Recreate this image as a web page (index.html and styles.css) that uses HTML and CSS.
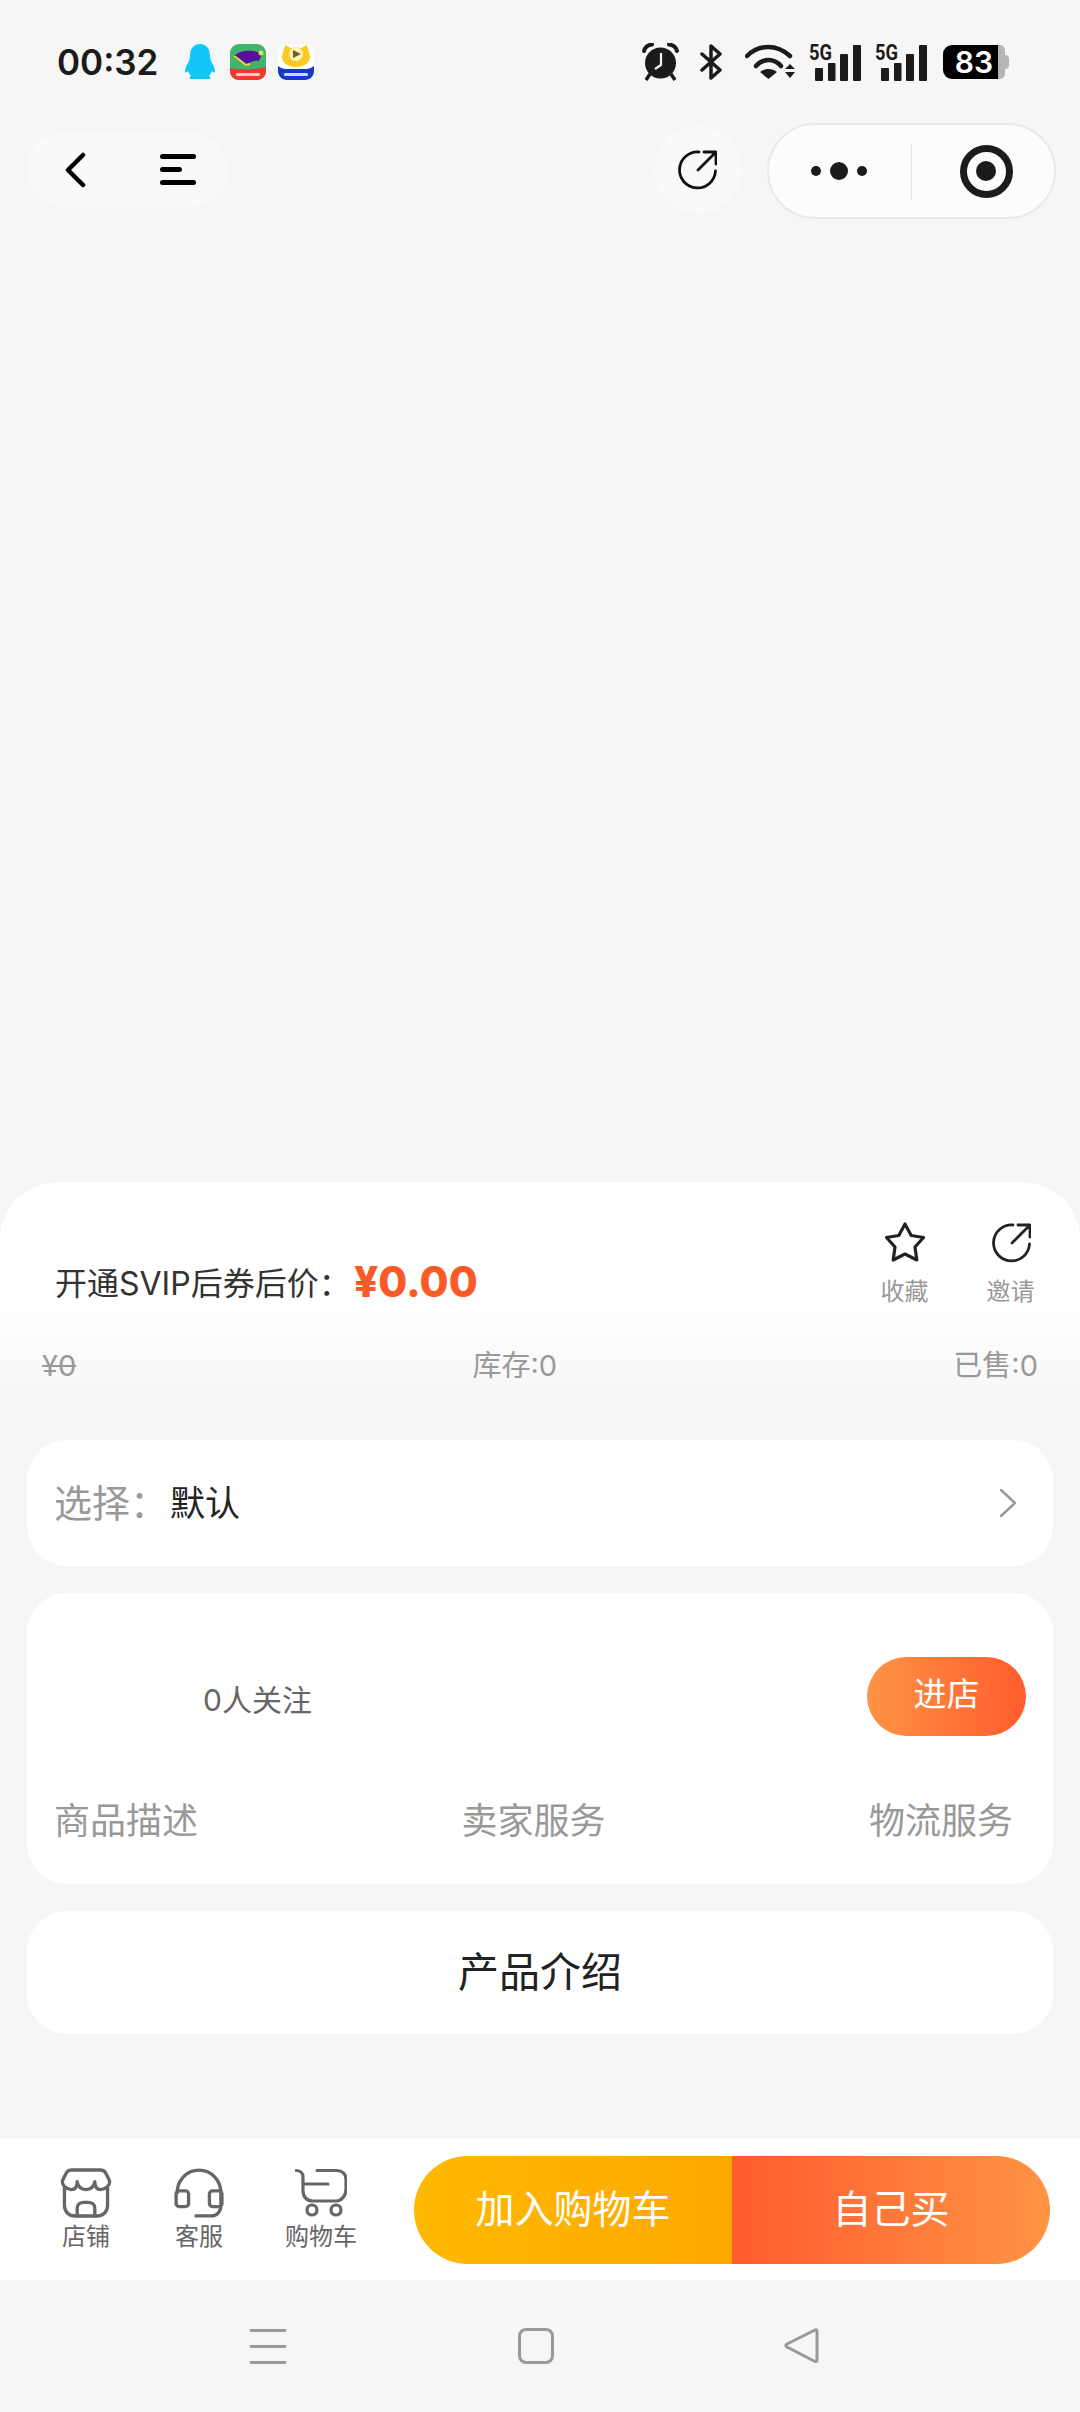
FILE: index.html
```html
<!DOCTYPE html>
<html lang="zh-CN">
<head>
    <meta charset="UTF-8">
    <meta name="viewport" content="width=device-width, initial-scale=1.0">
    <title>商品详情</title>
    <link rel="stylesheet" href="styles.css">
</head>
<body>
    <div class="page">
        <div class="status-bar">
            <div class="status-left">
                <span class="clock-time">00:32</span>
                <svg class="app-icon qq" viewBox="0 0 30 36"><path d="M15 0C8 0 5 6 5 12C5 15 4 17 3 19C1 22 0 25 0 28C0 29 1 29 3 27C4 29 5 31 6 32C4 33 4 35 6 35H24C26 35 26 33 24 32C25 31 26 29 27 27C29 29 30 29 30 28C30 25 29 22 27 19C26 17 25 15 25 12C25 6 22 0 15 0Z" fill="#10c6fb"/></svg>
                <svg class="app-icon" viewBox="0 0 36 36">
                    <rect width="36" height="36" rx="9" fill="#3fb56c"/>
                    <path d="M0 24C10 26 26 26 36 23V27C36 32 32 36 27 36H9C4 36 0 32 0 27Z" fill="#ea3a32"/>
                    <path d="M4 12C10 6 24 5 32 10L29 17C24 16 20 19 16 20C12 18 8 15 4 12Z" fill="#55129a"/>
                    <path d="M4 12C9 15 12 18 16 21L20 20" fill="none" stroke="#f5d33c" stroke-width="2"/>
                    <circle cx="31" cy="9" r="2.500" fill="#e8dc50"/>
                    <rect x="6" y="29" width="24" height="3" rx="1" fill="#ffc9bb"/>
                </svg>
                <svg class="app-icon" viewBox="0 0 36 36">
                    <rect width="36" height="36" rx="9" fill="#fff"/>
                    <path d="M0 22C4 26 10 25 18 25C26 25 32 26 36 22V27C36 32 32 36 27 36H9C4 36 0 32 0 27Z" fill="#1539c9"/>
                    <path d="M7 1L13 4C16 3 20 3 23 4L29 1L32 12C32 19 26 23 18 23C10 23 4 19 4 12Z" fill="#f8c91f"/>
                    <circle cx="18" cy="10" r="7" fill="#fff3b8"/>
                    <path d="M15 6L23 10L15 14Z" fill="#7a5a22"/>
                    <rect x="6" y="29" width="24" height="3" rx="1" fill="#c9d4ff"/>
                </svg>
            </div>
            <div class="status-right">
                <svg class="alarm" viewBox="0 0 37 38">
                    <path d="M2 8C3 4 6 2 10 1.500" fill="none" stroke="#1b1b1b" stroke-width="4" stroke-linecap="round"/>
                    <path d="M35 8C34 4 31 2 27 1.500" fill="none" stroke="#1b1b1b" stroke-width="4" stroke-linecap="round"/>
                    <path d="M8 31L4 37M29 31L33 37" stroke="#1b1b1b" stroke-width="3.500"/>
                    <circle cx="18.500" cy="20" r="15.500" fill="#1b1b1b"/>
                    <path d="M19 10V22L13 26" fill="none" stroke="#f6f6f6" stroke-width="2.200"/>
                </svg>
                <svg class="bluetooth" viewBox="0 0 23 36"><path d="M2 10L20 26L11 34V2L20 10L2 26" fill="none" stroke="#1b1b1b" stroke-width="3.500" stroke-linejoin="round" stroke-linecap="round"/></svg>
                <svg class="wifi" viewBox="0 0 51 36">
                    <path d="M2 12C14 0 32 0 45 12" fill="none" stroke="#1b1b1b" stroke-width="4.500" stroke-linecap="round"/>
                    <path d="M11 22C18 14 29 14 36 22" fill="none" stroke="#1b1b1b" stroke-width="4.500" stroke-linecap="round"/>
                    <path d="M15 28C20 24 27 24 32 28L23.500 35Z" fill="#1b1b1b"/>
                    <path d="M45 20L50 25H40ZM40 28H50L45 34Z" fill="#1b1b1b"/>
                </svg>
                <svg class="signal" viewBox="0 0 52 37">
                    <text x="0" y="16" class="signal-text" textLength="23" lengthAdjust="spacingAndGlyphs">5G</text>
                    <rect x="6" y="24" width="8" height="13" rx="1" fill="#1b1b1b"/>
                    <rect x="19" y="19" width="7.500" height="18" rx="1" fill="#1b1b1b"/>
                    <rect x="31" y="10" width="8" height="27" rx="1" fill="#1b1b1b"/>
                    <rect x="44" y="1" width="8" height="36" rx="1" fill="#1b1b1b"/>
                </svg>
                <svg class="signal" viewBox="0 0 52 37">
                    <text x="0" y="16" class="signal-text" textLength="23" lengthAdjust="spacingAndGlyphs">5G</text>
                    <rect x="6" y="24" width="8" height="13" rx="1" fill="#1b1b1b"/>
                    <rect x="19" y="19" width="7.500" height="18" rx="1" fill="#1b1b1b"/>
                    <rect x="31" y="10" width="8" height="27" rx="1" fill="#1b1b1b"/>
                    <rect x="44" y="1" width="8" height="36" rx="1" fill="#1b1b1b"/>
                </svg>
                <div class="battery">
                    <div class="battery-level">83</div>
                    <div class="battery-rest"></div>
                    <div class="battery-cap"></div>
                </div>
            </div>
        </div>

        <div class="nav-bar">
            <div class="nav-left">
                <svg class="nav-back" viewBox="0 0 22 36"><path d="M19 3L4 18L19 33" fill="none" stroke="#000" stroke-width="4.500" stroke-linecap="round" stroke-linejoin="round"/></svg>
                <div class="nav-menu">
                    <span class="menu-line"></span>
                    <span class="menu-line menu-line-short"></span>
                    <span class="menu-line"></span>
                </div>
            </div>
            <div class="nav-right">
                <div class="nav-share">
                    <svg class="share-icon" viewBox="0 0 40 40"><path d="M22 2A18 18 0 1 0 38.500 21M27 2H39V14M39 2L21 20" fill="none" stroke="#111" stroke-width="2.800" stroke-linecap="round" stroke-linejoin="round"/></svg>
                </div>
                <div class="capsule">
                    <div class="capsule-dots">
                        <span class="dot"></span>
                        <span class="dot dot-big"></span>
                        <span class="dot"></span>
                    </div>
                    <div class="capsule-divider"></div>
                    <div class="capsule-target"><span class="target-ring"><span class="target-core"></span></span></div>
                </div>
            </div>
        </div>

        <div class="spacer"></div>

        <div class="sheet">
            <div class="price-row">
                <div class="price-box">
                    <span class="price-label">开通SVIP后券后价：</span>
                    <span class="price-value">¥0.00</span>
                </div>
                <div class="price-actions">
                    <div class="action">
                        <svg class="star-icon" viewBox="0 0 44 42"><path d="M22 3L28.200 14.500L40.500 16.500L32 26L33.800 39L22 33L10.200 39L12 26L3.500 16.500L15.800 14.500Z" fill="none" stroke="#222" stroke-width="3.200" stroke-linejoin="round"/></svg>
                        <span class="action-label">收藏</span>
                    </div>
                    <div class="action">
                        <svg class="share-icon" viewBox="0 0 40 40"><path d="M22 2A18 18 0 1 0 38.500 21M27 2H39V14M39 2L21 20" fill="none" stroke="#222" stroke-width="2.800" stroke-linecap="round" stroke-linejoin="round"/></svg>
                        <span class="action-label">邀请</span>
                    </div>
                </div>
            </div>
            <div class="stock-row">
                <span class="old-price">¥0</span>
                <span>库存:0</span>
                <span>已售:0</span>
            </div>
        </div>

        <div class="card select-card">
            <span class="select-label">选择：</span>
            <span class="select-value">默认</span>
            <svg class="select-arrow" viewBox="0 0 18 30"><path d="M2 2L16 15L2 28" fill="none" stroke="#999" stroke-width="2.400" stroke-linecap="round" stroke-linejoin="round"/></svg>
        </div>

        <div class="card shop-card">
            <div class="shop-top">
                <span class="shop-follow">0人关注</span>
                <div class="shop-enter">进店</div>
            </div>
            <div class="shop-scores">
                <span>商品描述</span>
                <span>卖家服务</span>
                <span>物流服务</span>
            </div>
        </div>

        <div class="card intro-card">产品介绍</div>

        <div class="spacer-small"></div>

        <div class="bottom-bar">
            <div class="bottom-item item-shop">
                <svg class="bottom-icon" viewBox="0 0 52 51"><g fill="none" stroke="#666" stroke-width="3.400" stroke-linejoin="round" stroke-linecap="round"><path d="M11 2H41C44 2 46 4 47 7L50 13C51 18 45 22 41 22C36 22 35 18 35 14C34 19 31 22 26 22C21 22 18 19 17 14C17 18 16 22 11 22C7 22 1 18 2 13L5 7C6 4 8 2 11 2Z"/><path d="M4 20V38C4 45 9 49 15 49H37C43 49 48 45 48 38V20"/><path d="M17 49V41C17 37 20 35 24 35H28C32 35 35 37 35 41V49"/></g></svg>
                <span>店铺</span>
            </div>
            <div class="bottom-item item-service">
                <svg class="bottom-icon" viewBox="0 0 48 48"><g fill="none" stroke="#666" stroke-width="3.200" stroke-linejoin="round" stroke-linecap="round"><path d="M3 24C3 12 12 2 24 2C36 2 45 12 45 24V36C45 42 41 46 36 46H21"/><rect x="2" y="22" width="12" height="15" rx="3"/><rect x="34" y="22" width="12" height="15" rx="3"/></g></svg>
                <span>客服</span>
            </div>
            <div class="bottom-item item-cart">
                <svg class="bottom-icon" viewBox="0 0 52 48"><g fill="none" stroke="#666" stroke-width="3.200" stroke-linejoin="round" stroke-linecap="round"><path d="M1 1.500C5 1.500 8 4 8 8V22C8 28 12 32 18 32H41C47 32 51 26 51 20V10C51 5 47 1.500 42 1.500H22"/><path d="M10 15H33"/><circle cx="17" cy="41" r="5"/><circle cx="41" cy="41" r="5"/></g></svg>
                <span>购物车</span>
            </div>
            <div class="buy-group">
                <div class="buy-cart">加入购物车</div>
                <div class="buy-self">自己买</div>
            </div>
        </div>

        <div class="system-nav">
            <div class="sys-menu">
                <span class="sys-line"></span>
                <span class="sys-line"></span>
                <span class="sys-line"></span>
            </div>
            <div class="sys-home"></div>
            <svg class="sys-back" viewBox="0 0 36 36"><path d="M33 3L33 32C33 33.500 32 34 31 33.500L3 19C1.500 18 1.500 17 3 16L31 2C32 1.500 33 2 33 3Z" fill="none" stroke="#999" stroke-width="3" stroke-linejoin="round"/></svg>
        </div>
    </div>
</body>
</html>
```

FILE: styles.css
```css
* {
    box-sizing: border-box;
}
body {
    margin: 0;
    background-color: #f6f6f6;
    font-family: Inter, 'Noto Sans CJK SC', sans-serif;
    color: #222;
}
.page {
    width: 1080px;
    height: 2412px;
    display: flex;
    flex-direction: column;
    overflow: hidden;
}

/* status bar */
.status-bar {
    display: flex;
    justify-content: space-between;
    align-items: center;
    height: 38px;
    margin-top: 43px;
    padding: 0 71px 0 57px;
}
.status-left {
    display: flex;
    align-items: center;
}
.clock-time {
    font-size: 35px;
    font-weight: 600;
    color: #1b1b1b;
    width: 128px;
}
.app-icon {
    width: 36px;
    height: 36px;
    margin-right: 12px;
}
.qq {
    width: 30px;
    margin-right: 15px;
}
.status-right {
    display: flex;
    align-items: center;
}
.alarm {
    width: 37px;
    height: 38px;
    margin-right: 21px;
}
.bluetooth {
    width: 23px;
    height: 36px;
    margin-right: 22px;
}
.wifi {
    width: 51px;
    height: 36px;
    margin-right: 13px;
}
.signal {
    width: 52px;
    height: 37px;
    margin-right: 14px;
    overflow: visible;
}
.signal-text {
    font-family: Roboto, sans-serif;
    font-size: 22px;
    font-weight: 700;
    fill: #1b1b1b;
}
.battery {
    display: flex;
    align-items: center;
    height: 34px;
    margin-left: 2px;
}
.battery-level {
    width: 55px;
    height: 34px;
    background-color: #000;
    border-radius: 9px 0 0 9px;
    color: #fff;
    font-size: 30px;
    font-weight: 600;
    line-height: 34px;
    text-align: right;
    padding-right: 5px;
}
.battery-rest {
    width: 7px;
    height: 34px;
    background-color: #b5b5b5;
    border-radius: 0 5px 5px 0;
}
.battery-cap {
    width: 4px;
    height: 14px;
    background-color: #b5b5b5;
    border-radius: 0 4px 4px 0;
}

/* mini program nav */
.nav-bar {
    display: flex;
    justify-content: space-between;
    align-items: center;
    height: 96px;
    margin-top: 42px;
    padding: 0 24px 0 27px;
}
.nav-left {
    display: flex;
    align-items: center;
    width: 201px;
    height: 75px;
    margin-top: -3px;
    padding-left: 37px;
    background-color: #f9f9f9;
    border-radius: 38px;
}
.nav-back {
    width: 22px;
    height: 36px;
}
.nav-menu {
    display: flex;
    flex-direction: column;
    gap: 8px;
    margin-left: 74px;
}
.menu-line {
    display: block;
    width: 36px;
    height: 5px;
    background-color: #000;
    border-radius: 3px;
}
.menu-line-short {
    width: 22px;
}
.nav-right {
    display: flex;
    align-items: center;
    gap: 25px;
}
.nav-share {
    display: flex;
    align-items: center;
    justify-content: center;
    width: 88px;
    height: 88px;
    margin-top: -2px;
    padding-right: 2px;
    background-color: #f9f9f9;
    border-radius: 50%;
}
.share-icon {
    width: 40px;
    height: 40px;
}
.capsule {
    display: flex;
    align-items: center;
    width: 289px;
    height: 96px;
    background-color: #fcfcfc;
    border: 2px solid #e9e9e9;
    border-radius: 48px;
}
.capsule-dots {
    display: flex;
    align-items: center;
    justify-content: center;
    gap: 9px;
    width: 142px;
    padding-right: 2px;
}
.dot {
    display: block;
    width: 10px;
    height: 10px;
    background-color: #1b1b1b;
    border-radius: 50%;
}
.dot-big {
    width: 18px;
    height: 18px;
}
.capsule-divider {
    width: 1px;
    height: 57px;
    background-color: #e4e4e4;
}
.capsule-target {
    display: flex;
    align-items: center;
    justify-content: center;
    flex: 1;
    padding-left: 6px;
}
.target-ring {
    display: flex;
    align-items: center;
    justify-content: center;
    width: 53px;
    height: 53px;
    border: 7px solid #1b1b1b;
    border-radius: 50%;
}
.target-core {
    display: block;
    width: 20px;
    height: 20px;
    background-color: #1b1b1b;
    border-radius: 50%;
}
.spacer {
    flex: 1;
}

/* price sheet */
.sheet {
    height: 258px;
    padding: 39px 42px 0;
    background: linear-gradient(#fff 128px, #f6f6f6 220px);
    border-radius: 58px 58px 0 0;
}
.price-row {
    display: flex;
    justify-content: space-between;
    height: 104px;
    padding-left: 13px;
}
.price-box {
    display: flex;
    align-items: center;
    height: 46px;
    margin-top: 37px;
}
.price-label {
    font-size: 32px;
    color: #333;
    width: 299px;
    white-space: nowrap;
}
.price-value {
    font-size: 42px;
    font-weight: 800;
    color: #f95a28;
}
.price-actions {
    display: flex;
    gap: 61px;
    margin-right: 5px;
}
.action {
    display: flex;
    flex-direction: column;
    align-items: center;
    width: 45px;
}
.star-icon {
    width: 44px;
    height: 42px;
}
.action .share-icon {
    margin-top: 2px;
}
.action-label {
    margin-top: 13px;
    font-size: 24px;
    line-height: 32px;
    color: #999;
    white-space: nowrap;
}
.stock-row {
    display: flex;
    justify-content: space-between;
    margin-top: 21px;
    font-size: 29px;
    line-height: 40px;
    color: #999;
}
.old-price {
    text-decoration: line-through;
}

/* cards */
.card {
    margin: 0 27px;
    background-color: #fff;
    border-radius: 40px;
}
.select-card {
    display: flex;
    align-items: center;
    height: 126px;
    padding: 0 36px 6px 27px;
}
.select-label {
    width: 116px;
    font-size: 38px;
    color: #999;
}
.select-value {
    flex: 1;
    font-size: 35px;
    color: #222;
}
.select-arrow {
    width: 18px;
    height: 30px;
    margin-top: 6px;
}
.shop-card {
    height: 291px;
    margin-top: 27px;
    padding: 64px 27px 0 27px;
}
.shop-top {
    display: flex;
    justify-content: space-between;
    align-items: center;
    height: 79px;
}
.shop-follow {
    margin: 2px 0 0 149px;
    font-size: 30px;
    color: #666;
}
.shop-enter {
    width: 159px;
    height: 79px;
    background: linear-gradient(90deg, #ff9444, #ff5c2e);
    border-radius: 40px;
    color: #fff;
    font-size: 33px;
    line-height: 74px;
    text-align: center;
}
.shop-scores {
    display: flex;
    justify-content: space-between;
    margin-top: 60px;
    padding-right: 13px;
    font-size: 36px;
    line-height: 50px;
    color: #999;
}
.intro-card {
    height: 123px;
    margin-top: 27px;
    font-size: 41px;
    line-height: 122px;
    text-align: center;
}
.spacer-small {
    height: 105px;
}

/* bottom bar */
.bottom-bar {
    display: flex;
    align-items: center;
    height: 141px;
    padding-left: 30px;
    background-color: #fff;
}
.bottom-item {
    display: flex;
    flex-direction: column;
    align-items: center;
    height: 94px;
    margin-top: 10px;
    font-size: 24px;
    line-height: 34px;
    color: #666;
}
.bottom-icon {
    height: 50px;
    width: 52px;
    margin-bottom: 2px;
}
.item-shop {
    width: 112px;
}
.item-service {
    width: 114px;
}
.item-cart {
    width: 130px;
}
.buy-group {
    display: flex;
    width: 636px;
    height: 108px;
    margin-left: 28px;
    border-radius: 54px;
    overflow: hidden;
    color: #fff;
    font-size: 39px;
    line-height: 106px;
    text-align: center;
}
.buy-cart {
    width: 318px;
    background: linear-gradient(90deg, #ffb900, #ffa800);
}
.buy-self {
    width: 318px;
    background: linear-gradient(90deg, #ff5c2e, #ff9444);
}

/* system nav */
.system-nav {
    display: flex;
    align-items: center;
    height: 132px;
    padding: 0 0 0 250px;
    background-color: #f6f6f6;
}
.sys-menu {
    display: flex;
    flex-direction: column;
    gap: 13px;
}
.sys-line {
    display: block;
    width: 36px;
    height: 3px;
    background-color: #999;
}
.sys-home {
    width: 36px;
    height: 36px;
    margin-left: 232px;
    border: 3px solid #999;
    border-radius: 8px;
}
.sys-back {
    width: 36px;
    height: 36px;
    margin-left: 230px;
}
```
